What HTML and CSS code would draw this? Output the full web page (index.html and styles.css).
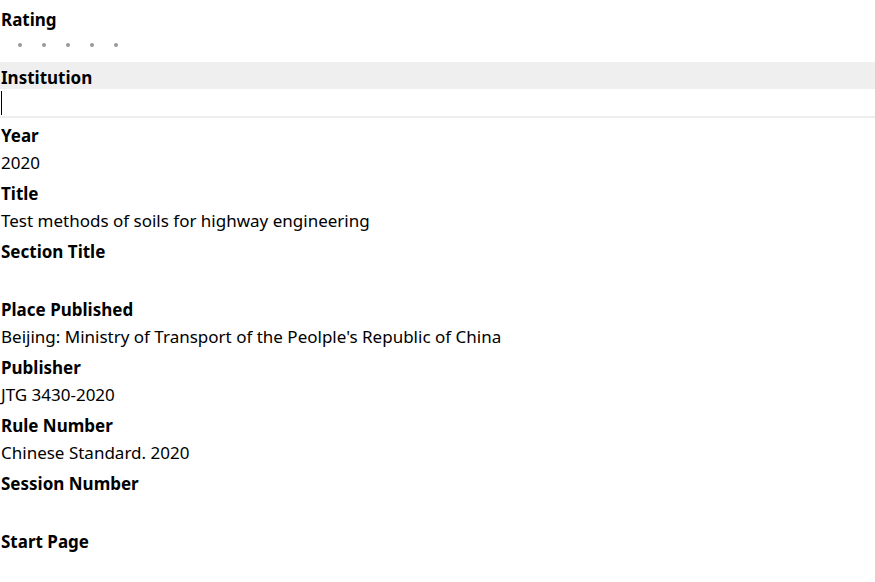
FILE: index.html
```html
<!DOCTYPE html>
<html>
<head>
<meta charset="utf-8">
<link rel="stylesheet" href="styles.css">
</head>
<body>
<div class="form">
  <div class="field">
    <div class="label">Rating</div>
    <div class="value rating"><span class="dot"></span><span class="dot"></span><span class="dot"></span><span class="dot"></span><span class="dot"></span></div>
  </div>
  <div class="field active">
    <div class="label">Institution</div>
    <div class="value input"><span class="caret"></span></div>
  </div>
  <div class="field">
    <div class="label">Year</div>
    <div class="value">2020</div>
  </div>
  <div class="field">
    <div class="label">Title</div>
    <div class="value">Test methods of soils for highway engineering</div>
  </div>
  <div class="field">
    <div class="label">Section Title</div>
    <div class="value"></div>
  </div>
  <div class="field">
    <div class="label">Place Published</div>
    <div class="value">Beijing: Ministry of Transport of the Peolple's Republic of China</div>
  </div>
  <div class="field">
    <div class="label">Publisher</div>
    <div class="value">JTG 3430-2020</div>
  </div>
  <div class="field">
    <div class="label">Rule Number</div>
    <div class="value">Chinese Standard. 2020</div>
  </div>
  <div class="field">
    <div class="label">Session Number</div>
    <div class="value"></div>
  </div>
  <div class="field">
    <div class="label">Start Page</div>
    <div class="value"></div>
  </div>
</div>
</body>
</html>
```
FILE: styles.css
```css
html, body {
  margin: 0;
  padding: 0;
  background: #ffffff;
}
body {
  font-family: "Noto Sans", "Open Sans", sans-serif;
  font-size: 17px;
  color: #000;
  overflow: hidden;
}
.form {
  display: flex;
  flex-direction: column;
  gap: 2px;
  padding-top: 4px;
}
.field {
  display: flex;
  flex-direction: column;
}
.label {
  height: 27px;
  box-sizing: border-box;
  padding-top: 2px;
  line-height: 27px;
  font-weight: bold;
  padding-left: 1px;
  white-space: nowrap;
}
.value {
  height: 29px;
  box-sizing: border-box;
  padding-top: 2px;
  line-height: 27px;
  padding-left: 1px;
  border-bottom: 2px solid transparent;
  white-space: nowrap;
}
.active .label {
  background: #efefef;
}
.active .input {
  border-bottom-color: #eeeeee;
  display: flex;
  align-items: center;
  padding-top: 0;
}
.caret {
  display: block;
  width: 1px;
  height: 24px;
  background: #000;
}
.rating {
  display: flex;
  align-items: center;
  gap: 20px;
  padding-left: 18px;
  padding-top: 0;
}
.dot {
  width: 4px;
  height: 4px;
  border-radius: 50%;
  background: #999;
}
```
